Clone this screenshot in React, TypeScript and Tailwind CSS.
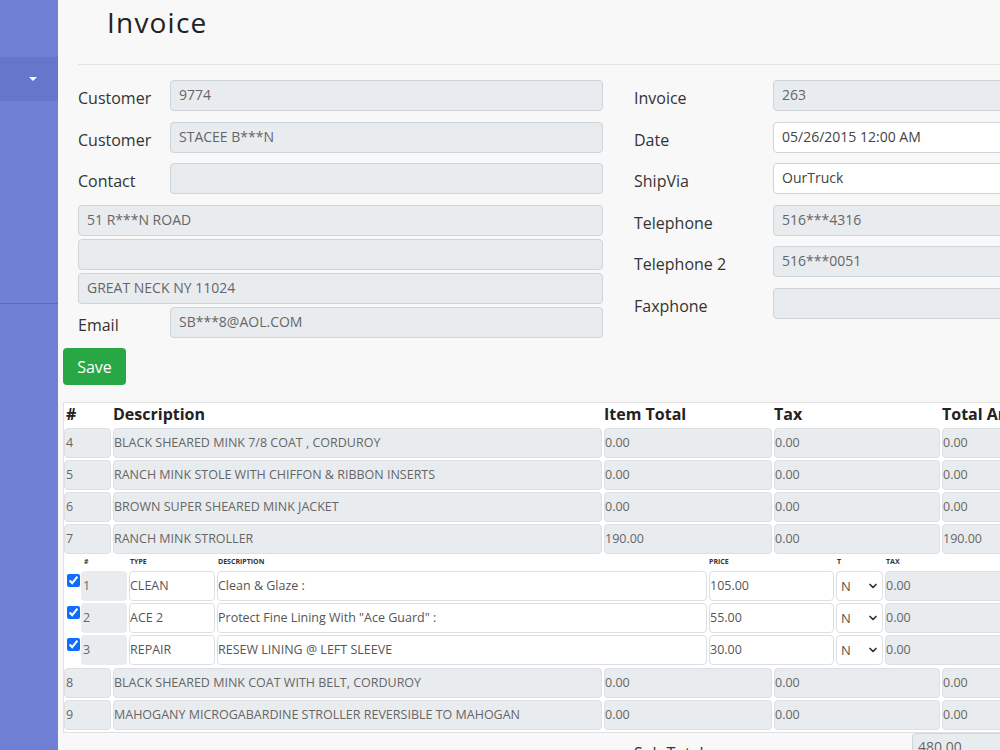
import React from 'react';
import { ChevronDown } from 'lucide-react';

const font = { fontFamily: '"Open Sans", "Noto Sans", sans-serif' };

const leftRows = [
  { label: 'Customer', value: '9774' },
  { label: 'Customer', value: 'STACEE B***N' },
  { label: 'Contact', value: '' },
];

const addressLines = ['51 R***N ROAD', '', 'GREAT NECK NY 11024'];

const rightRows = [
  { label: 'Invoice', value: '263', white: false },
  { label: 'Date', value: '05/26/2015 12:00  AM', white: true },
  { label: 'ShipVia', value: 'OurTruck', white: true },
  { label: 'Telephone', value: '516***4316', white: false },
  { label: 'Telephone 2', value: '516***0051', white: false },
  { label: 'Faxphone', value: '', white: false },
];

const items = [
  { no: '4', desc: 'BLACK SHEARED MINK 7/8 COAT , CORDUROY', total: '0.00', tax: '0.00', amount: '0.00' },
  { no: '5', desc: 'RANCH MINK STOLE WITH CHIFFON & RIBBON INSERTS', total: '0.00', tax: '0.00', amount: '0.00' },
  { no: '6', desc: 'BROWN SUPER SHEARED MINK JACKET', total: '0.00', tax: '0.00', amount: '0.00' },
  { no: '7', desc: 'RANCH MINK STROLLER', total: '190.00', tax: '0.00', amount: '190.00' },
];

const itemsAfter = [
  { no: '8', desc: 'BLACK SHEARED MINK COAT WITH BELT, CORDUROY', total: '0.00', tax: '0.00', amount: '0.00' },
  { no: '9', desc: 'MAHOGANY MICROGABARDINE STROLLER REVERSIBLE TO MAHOGAN', total: '0.00', tax: '0.00', amount: '0.00' },
];

const services = [
  { no: '1', type: 'CLEAN', desc: 'Clean & Glaze :', price: '105.00' },
  { no: '2', type: 'ACE 2', desc: 'Protect Fine Lining With "Ace Guard" :', price: '55.00' },
  { no: '3', type: 'REPAIR', desc: 'RESEW LINING @ LEFT SLEEVE', price: '30.00' },
];

const Field: React.FC<{ value: string; white?: boolean }> = ({ value, white }) => (
  <div
    className={`h-[31px] rounded-[4px] border border-[#ced4da] px-[8px] text-[14px] leading-[27px] truncate ${
      white ? 'bg-white text-[#444]' : 'bg-[#e9ecef] text-[#666]'
    }`}
  >
    {value}
  </div>
);

const Cell: React.FC<{ value: string; white?: boolean; className?: string }> = ({ value, white, className = '' }) => (
  <div
    className={`h-[30px] rounded-[4px] border border-[#dcdfe3] pl-0 pr-[2px] text-[12.5px] leading-[28px] truncate ${
      white ? 'bg-white text-[#555]' : 'bg-[#e9ecef] text-[#666]'
    } ${className}`}
  >
    {value}
  </div>
);

const ItemRow: React.FC<{ row: (typeof items)[number] }> = ({ row }) => (
  <div className="grid grid-cols-[47px_489px_168px_166px_170px] gap-[2px]">
    <Cell value={row.no} className="pl-[1px]" />
    <Cell value={row.desc} />
    <Cell value={row.total} />
    <Cell value={row.tax} />
    <Cell value={row.amount} />
  </div>
);

const subCols = 'grid grid-cols-[15px_46px_86px_490px_125px_47px_160px] gap-[2px]';

const FormRow: React.FC<{ label: string; labelWidth: string; children: React.ReactNode }> = ({ label, labelWidth, children }) => (
  <div className="flex items-start h-[31px]">
    <div className={`${labelWidth} pt-[6px] text-[16px] leading-[24px] text-[#333]`}>{label}</div>
    <div className="flex-1">{children}</div>
  </div>
);

export default function App() {
  return (
    <div className="flex h-[750px] w-[1000px] overflow-hidden bg-[#f8f8f8]" style={font}>
      {/* Sidebar */}
      <aside className="w-[58px] shrink-0 bg-[#7080d4] flex flex-col">
        <div className="h-[57px]" />
        <div className="h-[44px] bg-[#6576cb] flex items-center justify-end pr-[21px]">
          <span className="block w-0 h-0 border-l-[4px] border-r-[4px] border-t-[4px] border-l-transparent border-r-transparent border-t-white" />
        </div>
        <div className="h-[203px] border-b border-[#5a6bbd]" />
      </aside>

      {/* Main */}
      <main className="flex-1 min-w-0 pl-[5px]">
        <div className="w-[1150px]">
          <h1 className="pl-[44px] h-[44px] text-[28px] leading-[44px] font-medium tracking-[1.2px] text-[#222]">Invoice</h1>
          <div className="ml-[15px] mt-[20px] border-t border-[#e3e3e3]" />

          {/* Form */}
          <div className="pl-[15px] pt-[15px] flex gap-[31px]">
            <div className="w-[525px] flex flex-col">
              <div className="flex flex-col gap-[10.5px]">
                {leftRows.map((r, i) => (
                  <FormRow key={i} label={r.label} labelWidth="w-[92px]">
                    <Field value={r.value} />
                  </FormRow>
                ))}
              </div>
              <div className="mt-[10.5px] flex flex-col gap-[3.3px]">
                {addressLines.map((a, i) => (
                  <Field key={i} value={a} />
                ))}
                <FormRow label="Email" labelWidth="w-[92px]">
                  <Field value="SB***8@AOL.COM" />
                </FormRow>
              </div>
            </div>

            <div className="w-[525px] flex flex-col gap-[10.5px]">
              {rightRows.map((r, i) => (
                <FormRow key={i} label={r.label} labelWidth="w-[139px]">
                  <Field value={r.value} white={r.white} />
                </FormRow>
              ))}
            </div>
          </div>

          <button className="mt-[10px] h-[37px] w-[63px] rounded-[4px] bg-[#28a745] text-[16px] text-white">Save</button>

          {/* Line items */}
          <div className="mt-[17px] w-[1120px] border border-[#e2e2e2] bg-white pb-[2px]">
            <div className="grid grid-cols-[47px_489px_168px_166px_170px] gap-[2px] h-[25px] text-[16px] font-bold text-[#222] leading-[22px]">
              <div className="pl-[2px]">#</div>
              <div>Description</div>
              <div>Item Total</div>
              <div>Tax</div>
              <div>Total Amount</div>
            </div>
            <div className="flex flex-col gap-[2px]">
              {items.map((r) => (
                <ItemRow key={r.no} row={r} />
              ))}

              <div className={`${subCols} h-[14px] text-[7px] font-bold text-[#333] leading-[12px]`}>
                <div />
                <div className="pl-[3px]">#</div>
                <div className="pl-[1px]">TYPE</div>
                <div className="pl-[1px]">DESCRIPTION</div>
                <div>PRICE</div>
                <div className="pl-[1px]">T</div>
                <div className="pl-[1px]">TAX</div>
              </div>
              <div className="-mt-[1px] flex flex-col gap-[2px]">
                {services.map((s) => (
                  <div key={s.no} className={subCols}>
                    <div className="pt-[3px] pl-[3px]">
                      <input type="checkbox" checked readOnly className="block w-[13px] h-[13px] accent-[#0d6efd]" />
                    </div>
                    <Cell value={s.no} className="border-transparent pl-[1px]" />
                    <Cell value={s.type} white />
                    <Cell value={s.desc} white />
                    <Cell value={s.price} white />
                    <div className="h-[30px] rounded-[4px] border border-[#dcdfe3] bg-white flex items-center justify-between pl-[4px] pr-[3px] text-[13px] text-[#555]">
                      <span>N</span>
                      <ChevronDown size={12} strokeWidth={3.5} className="text-[#333]" />
                    </div>
                    <Cell value="0.00" />
                  </div>
                ))}
              </div>

              <div className="mt-[1px] flex flex-col gap-[2px]">
                {itemsAfter.map((r) => (
                  <ItemRow key={r.no} row={r} />
                ))}
              </div>
            </div>
          </div>

          {/* Totals */}
          <div className="flex items-start">
            <div className="ml-[571px] w-[278px] pt-[8px] text-[16px] text-[#333]">Sub Total</div>
            <div className="w-[160px] h-[30px] rounded-[4px] border border-[#ced4da] bg-[#e9ecef] px-[5px] text-[14px] leading-[26px] text-[#666]">
              480.00
            </div>
          </div>
        </div>
      </main>
    </div>
  );
}
